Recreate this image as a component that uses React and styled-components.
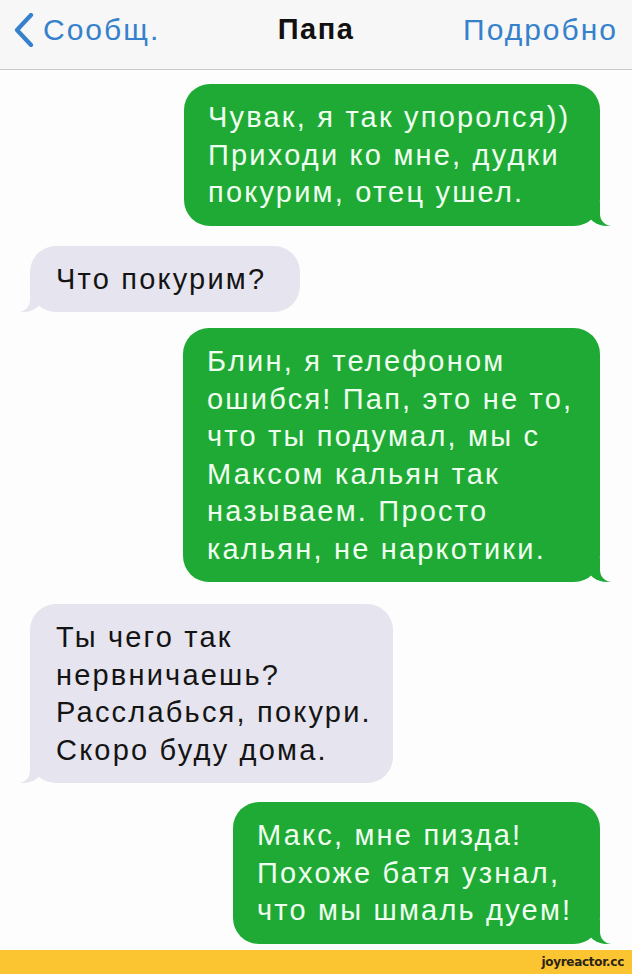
import React from 'react';
import styled, {createGlobalStyle} from "styled-components";

const GlobalStyle = createGlobalStyle`
  html, body {
    margin: 0;
    padding: 0;
    background: #fdfdfd;
  }
  body {
    font-family: "Liberation Sans", Arial, sans-serif;
  }
`;

const Screen = styled.div`
  width: 632px;
  height: 974px;
  display: flex;
  flex-direction: column;
  overflow: hidden;
  background: #fdfdfd;
`;

const Header = styled.header`
  height: 70px;
  box-sizing: border-box;
  padding: 0 16px 10px 14px;
  display: flex;
  align-items: center;
  justify-content: space-between;
  background: #f7f7f7;
  border-bottom: 1px solid #c9c9c9;
  font-size: 30px;
  letter-spacing: 2px;
`;

const Back = styled.div`
  display: flex;
  align-items: center;
  gap: 9px;
  width: 170px;
  color: #3581cc;
`;

const Title = styled.div`
  font-weight: 700;
  font-size: 29px;
  letter-spacing: 1.5px;
  color: #111;
`;

const Details = styled.div`
  width: 170px;
  text-align: right;
  color: #3581cc;
  margin-right: -2px;
`;

const Thread = styled.main`
  flex: 1;
  display: flex;
  flex-direction: column;
  padding: 14px 32px 0 30px;
`;

const Bubble = styled.div`
  position: relative;
  box-sizing: border-box;
  width: ${props => props.width}px;
  margin-top: ${props => props.gap || 0}px;
  align-self: ${props => (props.mine ? 'flex-end' : 'flex-start')};
  padding: 15px 10px 14px ${props => (props.mine ? 24 : 26)}px;
  border-radius: 26px;
  font-size: 29px;
  line-height: 37.5px;
  letter-spacing: 2.2px;
  background: ${props => (props.mine ? '#1faa35' : '#e6e4ee')};
  color: ${props => (props.mine ? '#effff0' : '#141414')};

  &::before {
    content: "";
    position: absolute;
    bottom: 0;
    height: 24px;
    width: 24px;
    background: ${props => (props.mine ? '#1faa35' : '#e6e4ee')};
    ${props => (props.mine
        ? 'right: -11px; border-bottom-left-radius: 20px 16px;'
        : 'left: -11px; border-bottom-right-radius: 20px 16px;')}
  }

  &::after {
    content: "";
    position: absolute;
    bottom: 0;
    height: 24px;
    width: 24px;
    background: #fdfdfd;
    ${props => (props.mine
        ? 'right: -24px; border-bottom-left-radius: 12px;'
        : 'left: -24px; border-bottom-right-radius: 12px;')}
  }
`;

const Line = styled.div`
  white-space: nowrap;
`;

const Footer = styled.footer`
  height: 24px;
  background: #fbc431;
  display: flex;
  align-items: center;
  justify-content: flex-end;
  padding-right: 8px;
  font-family: "DejaVu Sans", Verdana, sans-serif;
  font-weight: 700;
  font-size: 12px;
  letter-spacing: -0.3px;
  color: #2a2414;
`;

const Chevron = () => (
    <svg width="20" height="34" viewBox="0 0 20 34">
        <path d="M17 2 L3 17 L17 32" fill="none" stroke="#3581cc" strokeWidth="4.2"
              strokeLinecap="round" strokeLinejoin="round"/>
    </svg>
)

const messages = [
    {mine: true, width: 416, gap: 0, lines: ['Чувак, я так упоролся))', 'Приходи ко мне, дудки', 'покурим, отец ушел.']},
    {mine: false, width: 270, gap: 20, lines: ['Что покурим?']},
    {mine: true, width: 417, gap: 16, lines: ['Блин, я телефоном', 'ошибся! Пап, это не то,', 'что ты подумал, мы с', 'Максом кальян так', 'называем. Просто', 'кальян, не наркотики.']},
    {mine: false, width: 363, gap: 22, lines: ['Ты чего так', 'нервничаешь?', 'Расслабься, покури.', 'Скоро буду дома.']},
    {mine: true, width: 367, gap: 19, lines: ['Макс, мне пизда!', 'Похоже батя узнал,', 'что мы шмаль дуем!']},
];

export default function App() {
    return (
        <Screen>
            <GlobalStyle/>
            <Header>
                <Back><Chevron/>Сообщ.</Back>
                <Title>Папа</Title>
                <Details>Подробно</Details>
            </Header>
            <Thread>
                {messages.map((m, i) => (
                    <Bubble key={i} mine={m.mine} width={m.width} gap={m.gap}>
                        {m.lines.map((l, j) => <Line key={j}>{l}</Line>)}
                    </Bubble>
                ))}
            </Thread>
            <Footer>joyreactor.cc</Footer>
        </Screen>
    )
}
